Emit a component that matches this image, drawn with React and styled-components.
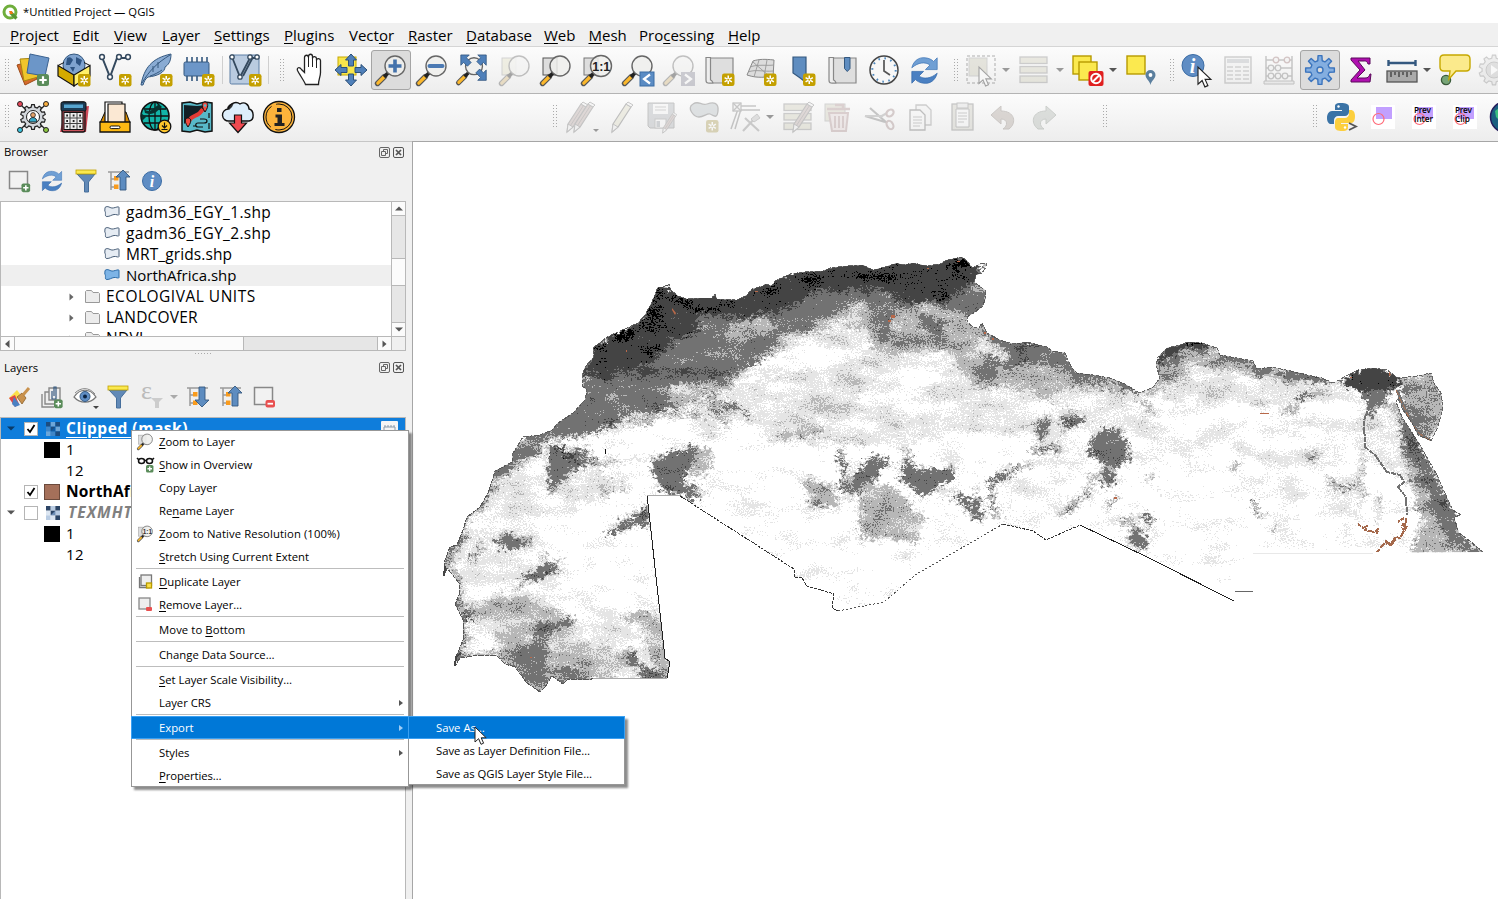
import React from "react";
import styled, { createGlobalStyle, css } from "styled-components";

const Global = createGlobalStyle`
  * { box-sizing: border-box; }
  html, body { margin: 0; padding: 0; }
  body { width: 1498px; height: 899px; overflow: hidden; background: #f0f0f0; }
  u { text-decoration-thickness: 1px; text-underline-offset: 2px; }
`;

const ui = `"Open Sans", "Noto Sans", sans-serif`;

const Window = styled.div`
  width: 1498px; height: 899px; display: flex; flex-direction: column;
  font-family: ${ui}; color: #000; position: relative; overflow: hidden; white-space: nowrap;
`;
const TitleBar = styled.header`
  height: 23px; background: #fff; display: flex; align-items: center; padding-left: 2px; gap: 5px;
  font-size: 11.3px; flex: none;
`;
const MenuBar = styled.nav`
  height: 24px; background: #f0f0f0; display: flex; align-items: center; padding-left: 10px; flex: none;
  border-bottom: 1px solid #d5d5d5;
`;
const MenuLabel = styled.span`
  width: ${(p) => p.$w}px; font-size: 15px; line-height: 22px;
`;
const ToolBar = styled.div`
  height: 47px; flex: none; display: flex; align-items: center; overflow: hidden; padding-bottom: ${(p) => (p.$last ? 2 : 0)}px;
  background: linear-gradient(#fcfcfc, #ededed); border-bottom: ${(p) => (p.$last ? "0" : "1px")} solid #b4b4b4;
`;
const Tool = styled.div`
  width: ${(p) => p.$w || 41}px; height: 40px; flex: none; margin-left: ${(p) => p.$ml || 0}px;
  display: flex; align-items: center; justify-content: center; border-radius: 3px;
  opacity: ${(p) => (p.$off ? 0.38 : 1)};
  filter: ${(p) => (p.$off ? "saturate(0.45)" : "none")};
  ${(p) => p.$on && css`width: 40px; background: #dcdcdc; border: 1px solid #a5a5a5;`}
  svg { overflow: visible; display: block; }
`;
const Grip = styled.i`
  width: 5px; height: 25px; flex: none; margin-left: ${(p) => p.$ml}px; margin-right: ${(p) => p.$mr}px;
  background-image: radial-gradient(circle, #aaa 0.7px, transparent 0.9px); background-size: 3px 3px;
`;
const Rule = styled.i`
  width: 1px; height: 28px; flex: none; background: #cfcfcf; margin: 0 ${(p) => p.$mr ?? 3}px 0 3px;
`;
const Caret = styled.i`
  flex: none; margin-left: ${(p) => p.$ml || 0}px; margin-right: ${(p) => p.$mr || 0}px; margin-top: ${(p) => p.$mt || 0}px;
  border: 4px solid transparent; border-top-color: ${(p) => p.$c || "#555"}; border-bottom: 0; width: 8px;
  ${(p) => p.$small && "border-width: 3px 3px 0; width: 6px;"}
`;
const Main = styled.main`flex: 1; display: flex; min-height: 0; `;
const Dock = styled.aside`
  width: 406px; flex: none; display: flex; flex-direction: column; background: #f0f0f0; border-top: 1px solid #c6c6c6;
`;
const Splitter = styled.div`width: 6px; flex: none; background: #f0f0f0; border-top: 1px solid #c6c6c6;`;
const Canvas = styled.section`
  flex: 1; background: #fff; border-left: 1px solid #a6a6a6; border-top: 1px solid #a6a6a6; overflow: hidden;
  svg { display: block; }
`;
const DockTitle = styled.div`
  height: 22px; display: flex; align-items: center; font-size: 11.3px; padding: 0 1px 0 4px; flex: none;
  span { flex: 1; margin-top: ${(p) => p.$mt ?? -3}px; }
  svg { margin-left: 2px; }
`;
const DockTools = styled.div`
  height: ${(p) => p.$h}px; display: flex; align-items: center; padding: 0 0 ${(p) => p.$pb}px 8px; flex: none; gap: ${(p) => p.$g}px;
  svg { overflow: visible; flex: none; }
`;
const BrowserBox = styled.div`
  height: 150px; flex: none; border: 1px solid #b8b8b8; display: grid; background: #fff;
  grid-template: 1fr 14px / 1fr 14px;
`;
const LayerBox = styled.div`
  flex: 1; border: 1px solid #b8b8b8; border-bottom: 0; background: #fff; overflow: hidden;
`;
const Clip = styled.div`overflow: hidden;`;
const Row = styled.div`
  height: 21px; display: flex; align-items: center; font-size: 15px; line-height: 21px;
  padding-left: ${(p) => p.$in}px; background: ${(p) => (p.$sel ? "#0f7ddb" : p.$hov ? "#efefef" : "transparent")};
  color: ${(p) => (p.$sel ? "#fff" : "#000")};
  svg { flex: none; }
`;
const Name = styled.span`
  margin-left: ${(p) => p.$ml ?? 6}px; letter-spacing: ${(p) => p.$ls ?? 0}px; font-size: ${(p) => p.$fs ?? 15}px;
  ${(p) => p.$b && "font-weight: 700;"}
  ${(p) => p.$u && "text-decoration: underline; text-decoration-thickness: 1px; text-underline-offset: 3px;"}
  ${(p) => p.$i && "font-style: italic; color: #808080;"}
`;
const Check = styled.span`
  width: 14px; height: 14px; flex: none; border: 1px solid #b5b5b5; background: #fff; margin-left: ${(p) => p.$ml}px;
  display: grid; place-items: center;
`;
const Swatch = styled.span`width: 16px; height: 16px; flex: none; background: ${(p) => p.$c}; border: 1px solid ${(p) => p.$bd || p.$c};`;
const Push = styled.span`margin-left: auto; margin-right: 7px; display: flex;`;
const BarV = styled.div`
  background: #e6e6e6; border-left: 1px solid #b8b8b8; display: flex; flex-direction: column; 
`;
const BarH = styled.div`
  background: #e6e6e6; border-top: 1px solid #b8b8b8; display: flex;
`;
const BarPart = styled.div`
  flex: ${(p) => (p.$s ? `0 0 ${p.$s}px` : 1)}; background: ${(p) => (p.$t ? "#e6e6e6" : "#fbfbfb")};
  display: grid; place-items: center;
  ${(p) => (p.$v ? "border-bottom" : "border-right")}: 1px solid #b8b8b8;
  &:last-child { border: 0; }
`;
const Corner = styled.div`border-left: 1px solid #b8b8b8; border-top: 1px solid #b8b8b8; background: #f0f0f0;`;
const DotLine = styled.div`
  height: 6px; flex: none; display: flex; justify-content: center;
  &::after { content: ""; width: 18px; height: 3px; margin-top: 1px; background: radial-gradient(circle, #aaa 0.6px, transparent 0.8px) 0 0 / 3px 3px; }
`;
const Popup = styled.div`
  position: absolute; left: ${(p) => p.$x}px; top: ${(p) => p.$y}px; width: ${(p) => p.$w}px; background: #fff;
  box-shadow: inset 0 0 0 1px #979797, 3px 3px 2px rgba(0,0,0,.45);
`;
const Item = styled.div`
  height: 23px; display: flex; align-items: center; font-size: 11.3px; line-height: 22px; padding-right: 6px;
  letter-spacing: ${(p) => p.$ls ?? 0}px;
  color: ${(p) => (p.$on ? "#fff" : "#000")};
  ${(p) => p.$on && "background: #0078d7; box-shadow: inset 0 0 0 1px #3ba0f2;"}
`;
const IconCell = styled.span`width: ${(p) => p.$w}px; padding-left: 6px; flex: none; display: flex; svg { overflow: visible; }`;
const Chevron = styled.i`
  margin-left: auto; border: 3.5px solid transparent; border-left: 4px solid ${(p) => (p.$on ? "#9fcdf5" : "#555")}; border-right: 0;
`;
const Divider = styled.div`height: 2px; padding: 0 5px; &::after { content: ""; display: block; height: 1px; background: #bdbdbd; }`;
const Pointer = styled.div`position: absolute; left: 474px; top: 726px;`;

/* ---------- icons ---------- */
const S = ({ s = 32, b = 32, children }) => (
  <svg width={s} height={s} viewBox={`0 0 ${b} ${b}`} fill="none">{children}</svg>
);
const Star = ({ x = 20, y = 20 }) => (
  <g transform={`translate(${x} ${y})`}>
    <rect width="12.5" height="12.5" rx="2.2" fill="#c4a000" />
    <path d="M6.25 2v8.5M2.6 4.1l7.3 4.3M2.6 8.4l7.3-4.3" stroke="#fff" strokeWidth="1.5" />
    <circle cx="6.25" cy="6.25" r="1" fill="#c4a000" />
  </g>
);
const Plus = ({ x = 20, y = 20, k = 1 }) => (
  <g transform={`translate(${x} ${y}) scale(${k})`}>
    <rect width="12" height="12" rx="2.5" fill="#5a8c5a" />
    <path d="M6 2.3v7.4M2.3 6h7.4" stroke="#fff" strokeWidth="2.2" />
  </g>
);
const Lens = ({ cx = 20, cy = 12, r = 10, fill = "#eeeeec", children }) => (
  <g>
    <path d="M2.5 29.5L9.5 22.5" stroke="#555" strokeWidth="5.4" strokeLinecap="round" />
    <path d="M2.8 29.2L9 23" stroke="#fcb82c" strokeWidth="3.2" strokeLinecap="round" />
    <path d="M9 23l4-4" stroke="#222" strokeWidth="3.6" />
    <circle cx={cx} cy={cy} r={r} fill={fill} fillOpacity=".85" stroke="#666" strokeWidth="1.4" />
    {children}
  </g>
);
const Refresh = ({ s = 32 }) => (
  <S s={s}>
    <path d="M2 13C4 5 10 1 17 2c4 .4 7 2 9 4l4-4v13H17l5-5c-5-4-13-3-20 3z" fill="#6f9fd4" stroke="#3f74b5" strokeWidth=".8" />
    <path d="M30 19c-2 8-8 12-15 11-4-.4-7-2-9-4l-4 4V17h13l-5 5c5 4 13 3 20-3z" fill="#4a80c2" stroke="#3268ab" strokeWidth=".8" />
  </S>
);
const ArrowFour = "M16 0l5.5 6h-3v6h-5V6h-3zM16 32l5.5-6h-3v-6h-5v6h-3zM0 16l6-5.500v3h6v5H6v3zM32 16l-6-5.500v3h-6v5h6v3z";
const Sheet = () => (
  <g><path d="M5 4h24v25H5z" fill="#dedede" stroke="#888" strokeWidth="1.2" /><path d="M2 3.500h4.500v22.500c2 0 2 3 3 3H4c-1.500 0-2-1-2-3z" fill="#eee" stroke="#888" strokeWidth="1.2" /></g>
);
const Cursor = ({ x = 0, y = 0, k = 1 }) => (
  <path transform={`translate(${x} ${y}) scale(${k})`} d="M0 0v15l3.600-3.300L6 17.300l2.600-1.100L6.200 10.800h5z" fill="#fff" stroke="#222" strokeWidth="1" />
);
const gearPath = (n, r1, r2, c) => {
  let d = "";
  const st = (Math.PI * 2) / n;
  for (let i = 0; i < n; i++) {
    const a = i * st;
    [[r1, -0.3], [r2, -0.17], [r2, 0.17], [r1, 0.3]].forEach(([r, o], j) => {
      d += `${i + j ? "L" : "M"}${(c + r * Math.sin(a + o * st)).toFixed(2)} ${(c - r * Math.cos(a + o * st)).toFixed(2)}`;
    });
  }
  return d + "z";
};
const Pencil = ({ x = 0 }) => (
  <g transform={`translate(${x} 0)`}>
    <path d="M5 23L18 3l5 3-13 20-6 5z" fill="#dfdca8" stroke="#666" strokeWidth="1.2" /><path d="M5 23l5 3-6 5zM18 3l2-2 5 3-2 2z" fill="#eee" stroke="#777" />
  </g>
);
const RedPencil = ({ x = 0, y = 0, k = 1 }) => (
  <g transform={`translate(${x} ${y}) scale(${k})`}>
    <path d="M5 23L18 3l5 3-13 20-6 5z" fill="#c9a39b" stroke="#777" strokeWidth="1.2" /><path d="M5 23l5 3-6 5zM18 3l2-2 5 3-2 2z" fill="#eee" stroke="#777" /><path d="M7.500 24.500l13-20" stroke="#8a7a78" />
  </g>
);

const I = {
  dataSource: <S><path d="M0 11l14-4 6 18-12 6z" fill="#d66b2c" stroke="#9c4a18" /><path d="M3 5l17-1 1 19-14 4z" fill="#f0c52b" stroke="#a88610" /><path d="M13 0l19 4-4 18-18-3z" fill="#6c96c8" stroke="#3b6291" /><Plus /></S>,
  geopackage: <S><circle cx="16" cy="11" r="11" fill="#7fa3cf" stroke="#34587f" /><path d="M9 4c3-2 5 0 6 2l-3 5-4 0zM18 3l6 3-2 6-4-3zM12 13l5 0-2 5z" fill="#2e5483" /><path d="M0 11.500l16 9.500v11L0 22z" fill="#d4ab00" stroke="#111" strokeWidth="1.200" /><path d="M32 11.500l-16 9.500v11l16-10z" fill="#fff06a" stroke="#111" strokeWidth="1.200" /><path d="M0 11.500l6-3M32 11.500l-6-3" stroke="#111" /><Star /></S>,
  shape: <S><path d="M3 3l8 20L18 4h9" stroke="#34495e" strokeWidth="2" /><g fill="#fff" stroke="#34495e" strokeWidth="1.500"><circle cx="3" cy="3" r="2.400" /><circle cx="11" cy="23" r="2.400" /><circle cx="20" cy="3" r="2.400" /><circle cx="29" cy="3" r="2.400" /></g><Star /></S>,
  feather: <S><path d="M1 31C4 14 12 4 31 0c0 8-3 11-6 13 0 5-7 9-17 10-3 2-4 5-5 8z" fill="#89abd3" stroke="#34587f" /><path d="M2 29C9 17 17 9 30 1M10 22c4-1 9-4 12-6M13 12v6M18 8v6" stroke="#34587f" strokeWidth="1" /><Star /></S>,
  chip: <S><path d="M5 3v6M10 3v6M15 3v6M20 3v6M25 3v6M5 22v5M10 22v5M15 22v5" stroke="#34587f" strokeWidth="1.600" /><rect x="2" y="8" width="25" height="14" rx="1.500" fill="#6c96c8" stroke="#34587f" /><Star /></S>,
  virtual: <S><rect x="1" y="1" width="29" height="29" rx="1.500" fill="#b9cbe0" stroke="#5d7ea5" /><path d="M3 3l8 20L21 4h8M14 22L24 3" stroke="#34495e" strokeWidth="1.800" /><g fill="#fff" stroke="#34495e" strokeWidth="1.300"><circle cx="3" cy="3" r="2.200" /><circle cx="11" cy="23" r="2.200" /><circle cx="21" cy="3" r="2.200" /><circle cx="28" cy="3" r="2.200" /></g><Star /></S>,
  hand: <S><path d="M10.500 30.500c-1-3-6-10-8-14-1-3 2-4 4-1l3 3V3.500c0-3 4-3 4 0v-1c0-3 4-3 4 0v2c0-3 4-2 4 0v2c0-3 4-2 4 0v12c0 4-2 7-2 12z" fill="#fff" stroke="#222" strokeWidth="1.300" /><path d="M13.500 3v10M17.500 4v9M21.500 6v8" stroke="#222" /></S>,
  pan: <S><rect x="3" y="3" width="18" height="18" fill="#f8e64b" stroke="#c6a800" /><path d={ArrowFour} fill="#4f80ba" stroke="#2c5079" /></S>,
  zoomIn: <S><Lens><path d="M20 5.500v13M13.500 12h13" stroke="#4472ab" strokeWidth="3.600" /></Lens></S>,
  zoomOut: <S><Lens><path d="M13.500 12h13" stroke="#4c7ab3" strokeWidth="4" strokeLinecap="round" /></Lens></S>,
  zoomFull: <S b={34}><g transform="translate(-2 1)"><Lens cx={19} r={9} /><path d="M5 0h9l-3 3 5 5-4 4-4-4-3 3zM32 0h-9l3 3-4 4 4 4 3-3 3 3zM32 27h-9l3-3-5-5 4-4 4 4 3-3z" fill="#4f80ba" stroke="#2c5079" strokeWidth=".8" /></g></S>,
  zoomSel: <S><rect x="3" y="4" width="14" height="17" fill="#e6e0a0" stroke="#999" /><Lens /></S>,
  zoomLayer: <S><rect x="3" y="4" width="14" height="17" fill="#ddd" stroke="#555" /><Lens /></S>,
  zoomNative: <S><rect x="3" y="4" width="14" height="17" fill="#ddd" stroke="#777" /><Lens r={10.5}><text x="20.300" y="16.500" fontFamily="Liberation Sans, sans-serif" fontWeight="700" fontSize="12.500" textAnchor="middle" fill="#222">1:1</text></Lens></S>,
  zoomLast: <S><Lens /><rect x="18" y="18" width="14" height="14" fill="#5b8cc4" stroke="#3b6ca4" /><path d="M28 20.500l-6 4.500 6 4.500" stroke="#fff" strokeWidth="2.200" /></S>,
  zoomNext: <S><Lens /><rect x="18" y="18" width="14" height="14" fill="#88a" /><path d="M22 20.500l6 4.500-6 4.500" stroke="#fff" strokeWidth="2.200" /></S>,
  mapNew: <S><Sheet /><Star x={18} y={19.5} /></S>,
  map3d: <S><path d="M8 7c6-2 12-2 21-1l-1 18C19 22 14 25 2 21z" fill="#dcdcdc" stroke="#888" /><path d="M5 13c8-3 16-1 24-2M3 18c8-3 16 0 25-1M14 6l-5 17M22 6l-3 17M8 8l16 14" stroke="#999" strokeWidth=".9" /><Star x={19} y={19.5} /></S>,
  bookmarkNew: <S><path d="M7 3h13v25.500l-6.500-5L7 19z" fill="#5f8dc0" stroke="#34587f" strokeWidth="1.200" /><Star x={17} y={19.500} /></S>,
  bookmarks: <S><Sheet /><path d="M17.500 3.500h5.500v11l-2.750 3-2.750-3z" fill="#5f8dc0" stroke="#34587f" /></S>,
  clock: <S><circle cx="16" cy="16" r="14" fill="#f7f7f7" stroke="#444" strokeWidth="1.500" /><circle cx="16" cy="16" r="11.700" stroke="#4f88bd" strokeWidth="2" strokeDasharray="1.600 4.530" /><path d="M16 6v11l6 4" stroke="#555" strokeWidth="1.700" /></S>,
  select: <S><rect x="2" y="2" width="28" height="27" stroke="#777" strokeWidth="1.500" strokeDasharray="3 2" /><rect x="4" y="4" width="18" height="18" fill="#c9c59c" stroke="#999" /><Cursor x={14} y={13} k={1.1} /></S>,
  rows: <S><g fill="#d3cfa4" stroke="#888" strokeWidth="1.300"><rect x="2" y="3" width="27" height="6.500" /><rect x="2" y="12.500" width="27" height="6.500" /><rect x="2" y="22" width="27" height="6.500" /></g></S>,
  deselect: <S><g fill="#fbe94f" stroke="#b79a00" strokeWidth="1.400"><rect x="1" y="2" width="18" height="18" /><rect x="7" y="8" width="18" height="18" /></g><rect x="16.500" y="17" width="15" height="15" rx="2" fill="#e02020" /><circle cx="24" cy="24.500" r="4.800" stroke="#fff" strokeWidth="2" /><path d="M20.500 28l7-7" stroke="#fff" strokeWidth="2" /></S>,
  selectLoc: <S><rect x="2" y="2" width="18" height="18" fill="#fbe94f" stroke="#b79a00" strokeWidth="1.400" /><path d="M25.500 31c-1-5-5-6-5-10a5 5 0 0 1 10 0c0 4-4 5-5 10z" fill="#5b7f9e" /><circle cx="25.500" cy="21" r="1.900" fill="#fff" /></S>,
  identify: <S><circle cx="12" cy="11.500" r="11" fill="#5f8dc4" stroke="#3b6ca4" /><text x="11.500" y="18.500" fontFamily="Liberation Serif, serif" fontStyle="italic" fontWeight="700" fontSize="20" textAnchor="middle" fill="#fff">i</text><Cursor x={17} y={13} k={1.15} /></S>,
  table: <S><rect x="3" y="3" width="26" height="26" fill="#eee" stroke="#888" strokeWidth="1.400" /><path d="M5 7h22" stroke="#a8b4c0" strokeWidth="4" /><path d="M5 13h6M5 17h6M5 21h6M5 25h6M13 13h6M13 17h6M13 21h6M13 25h6M21 13h6M21 17h6M21 21h6M21 25h6" stroke="#999" strokeWidth="1.300" /></S>,
  abacus: <S><path d="M3 2v26M29 2v26M3 6h26M3 14h26M3 22h26" stroke="#777" strokeWidth="1.500" /><path d="M1 27h30v3H1z" fill="#ddd" stroke="#777" /><g fill="#eee" stroke="#777" strokeWidth="1.300"><circle cx="13" cy="6" r="2.800" stroke="#b66" /><circle cx="24" cy="6" r="2.800" stroke="#b66" /><circle cx="8" cy="14" r="2.800" /><circle cx="15" cy="14" r="2.800" /><circle cx="8" cy="22" r="2.800" /><circle cx="15" cy="22" r="2.800" /><circle cx="22" cy="22" r="2.800" /></g></S>,
  gear: <S><path d={gearPath(8, 9.5, 14.5, 16)} fill="#84aee0" stroke="#3b74bd" strokeWidth="1.400" strokeLinejoin="round" /><circle cx="16" cy="16" r="3" fill="#dcdcdc" stroke="#3b74bd" strokeWidth="1.400" /></S>,
  sigma: <S><path d="M6 4h19v6h-2c-1-3-2-3-4-3h-6l7 9-8 8h8c3 0 4-1 5-4h1l-1 8H6v-2l9-10-9-10z" fill="#b010b0" stroke="#5a0a5a" /></S>,
  ruler: <S><path d="M2 9h28M2.500 6v6M29.500 6v6" stroke="#34587f" strokeWidth="2.400" /><rect x="1" y="17" width="30" height="11" fill="#aaa" stroke="#555" strokeWidth="1.300" /><path d="M5 18v5M9 18v3M13 18v5M17 18v3M21 18v5M25 18v3" stroke="#333" strokeWidth="1.200" /></S>,
  tip: <S><circle cx="7" cy="26" r="4.600" fill="#77a577" stroke="#3a5a3a" strokeWidth="1.300" /><path d="M5 1h22c3 0 4 2 4 4v8c0 3-2 4-4 4H17l-7 8 1-8H5c-3 0-4-2-4-4V5c0-3 2-4 4-4z" fill="#fbea8c" stroke="#c6a800" strokeWidth="1.400" /></S>,
  action: <S><path d={gearPath(10, 12, 15, 16)} fill="#ddd" stroke="#888" strokeWidth="1.200" /><circle cx="16" cy="16" r="8" fill="#bbb" stroke="#888" /><path d="M13 11l7 5-7 5z" fill="#fff" /></S>,
  hub: <S><path d="M3 3l7 7M29 3l-7 7M3 29l7-7M29 29l-7-7" stroke="#222" strokeWidth="1.300" /><path d={gearPath(10, 10, 12.5, 16)} fill="#d3d7dc" stroke="#222" strokeWidth="1.200" /><circle cx="16" cy="16" r="6.500" fill="#fff" stroke="#222" /><path d="M12 21c0-6 8-6 8 0z" fill="#36a9c9" stroke="#222" /><circle cx="16" cy="14" r="2.400" fill="#e5a26a" stroke="#222" strokeWidth=".8" /><g stroke="#222"><circle cx="3" cy="3" r="2.500" fill="#e8485a" /><circle cx="29" cy="3" r="2.500" fill="#fbb040" /><circle cx="3" cy="29" r="2.500" fill="#3ac5e0" /><circle cx="29" cy="29" r="2.500" fill="#8cc63f" /></g></S>,
  calc: <S><path d="M22 6l9-1-3 26-26 0 4-18z" fill="#d04a5a" /><rect x="4" y="1" width="23" height="30" rx="2" fill="#c9525c" stroke="#111" strokeWidth="1.300" /><rect x="3" y="1" width="25" height="9" rx="1.500" fill="#1b3c55" stroke="#111" /><rect x="6" y="3.500" width="19" height="3.500" fill="#56a5cf" /><rect x="6" y="11.500" width="19" height="17" fill="#eee" stroke="#111" /><path d="M12 12v16M19 12v16M6 17h19M6 22.500h19" stroke="#444" strokeWidth="1" /><path d="M8.200 14.500h1.800M14.700 14.500h1.800M21.200 14.500h1.800M8.200 20h1.800M14.700 20h1.800M21.200 20h1.800M8.200 25.500h1.800M14.700 25.500h1.800M21.200 25.500h1.800" stroke="#222" strokeWidth="1.800" /></S>,
  tray: <S><path d="M1 22L6 11h21l4 11z" fill="#d98c00" stroke="#111" /><path d="M6 1h17v20H6z" fill="#fff" stroke="#111" strokeWidth="1.200" /><path d="M9 3h17v19H9z" fill="#fbe8d3" stroke="#111" strokeWidth="1.200" /><path d="M1 21h30v10H1z" fill="#fdb913" stroke="#111" strokeWidth="1.300" /><rect x="11" y="25" width="10" height="2.600" rx="1.300" fill="#fff" stroke="#111" /></S>,
  globe: <S><circle cx="15" cy="15" r="14" fill="#12b5a8" stroke="#111" strokeWidth="1.600" /><ellipse cx="15" cy="15" rx="6" ry="14" stroke="#111" strokeWidth="1.300" /><path d="M15 1v28M1 15h28M4 8h22M4 22h22" stroke="#111" strokeWidth="1.300" /><path d="M4 8c6 5 10-1 15-5l3 3c-5 4-8 9-17 6zM1 12l5 4-4 4z" fill="#08322f" /><circle cx="24.500" cy="25.500" r="6.300" fill="#fdc52c" stroke="#111" strokeWidth="1.300" /><path d="M24.500 21.500v5M22 24.500l2.500 2.500 2.500-2.500M21.500 28.500h6" stroke="#111" strokeWidth="1.200" /></S>,
  treasure: <S><path d="M1 2l8-1 7 2 8-2 7 1v28l-7 1-8-2-7 2-8-1z" fill="#58b9c9" stroke="#111" strokeWidth="1.500" /><path d="M3 4l13 1 10-1-6 9-10 3-7 7z" fill="#0b1014" opacity=".9" /><path d="M8 20c3-7 9-3 14-12" stroke="#e33b35" strokeWidth="4" /><path d="M24 11c-5-7-2-10 0-10s5 3 0 10zM7 26c-5-7-2-9 0-9s5 2 0 9z" fill="#ef4b40" stroke="#111" /><circle cx="24" cy="4.500" r="1.300" fill="#58b9c9" /><path d="M15 25h-3M19 18h4c4 0 4 4 0 4h-6c-3 0-3 4 0 4h5M28 28v-6M28 12v5" stroke="#111" strokeWidth="1.200" /></S>,
  cloud: <S><path d="M7 20a6 6 0 0 1-1-12C8 2 14 0 18 3c5-3 9 1 9 5 5 1 6 11 0 12z" fill="#ddeefb" stroke="#111" strokeWidth="1.400" /><path d="M5 7c1-3 3-4 7-5l-2 4-3 3z" fill="#111" opacity=".85" /><path d="M12.500 14h7v8h5l-8.500 9.500L7.500 22h5z" fill="#f04a50" stroke="#111" strokeWidth="1.200" /></S>,
  about: <S><circle cx="16" cy="16" r="15.500" fill="#fcb33b" stroke="#111" strokeWidth="1.300" /><circle cx="16" cy="16" r="13" stroke="#111" strokeWidth="1" strokeDasharray="24 5" /><path d="M12.500 13.500h6.500v8.500h2.500v3H11.500v-3h3v-5.500h-2zM14 7h4.500v4H14z" fill="#222" /></S>,
  pencils: <S><RedPencil x={-3} /><RedPencil x={4} /></S>,
  pencil: <S><Pencil x={3} /></S>,
  save: <S><path d="M1 2h26v25H3l-2-2z" fill="#a7b1bc" stroke="#777" /><rect x="6" y="3" width="15" height="10" fill="#f4f4f4" /><path d="M8 6h11M8 9h11" stroke="#999" /><rect x="8" y="18" width="11" height="9" fill="#f4f4f4" stroke="#888" /><rect x="9.500" y="20" width="3.500" height="6" fill="#8f9dad" /><RedPencil x={13} y={11} k={0.68} /></S>,
  blob: <S><path d="M4 3c6-4 8 2 14 0s12-2 11 7-5 4-8 3-6 3-11 3S-3 7 4 3z" fill="#aebec8" stroke="#666" strokeWidth="1.300" /><Star x={17} y={19} /></S>,
  vertex: <S><path d="M2 28L9 8M6 28l6-20M12 5h15M12 9h19" stroke="#777" strokeWidth="1.500" /><rect x="4" y="2" width="8" height="8" stroke="#777" strokeWidth="1.300" fill="#eee" /><path d="M4 2l8 8M12 2L4 10" stroke="#777" strokeWidth="1.300" /><path d="M14 30l12-13M16 17l14 13" stroke="#888" strokeWidth="2.200" /><path d="M22 18l6-5 3 4-6 4z" fill="#bbb" stroke="#888" /></S>,
  attrs: <S><g fill="#d3cfa4" stroke="#888" strokeWidth="1.300"><rect x="2" y="3" width="27" height="6.500" /><rect x="2" y="12.500" width="27" height="6.500" /><rect x="2" y="22" width="27" height="6.500" /></g><RedPencil x={7} /></S>,
  trash: <S><rect x="2" y="3" width="20" height="17" fill="#d3cfa4" stroke="#999" /><path d="M4 8h23M12 4h8v4" stroke="#c98888" strokeWidth="2.500" /><path d="M6 12h19l-2 18H9z" fill="#f0d0d0" stroke="#c98888" strokeWidth="2" /><path d="M12 15v12M16 15v12M20 15v12" stroke="#c98888" strokeWidth="2" /></S>,
  cut: <S><path d="M1 15l20 6M6 7l17 15" stroke="#777" strokeWidth="2.200" /><path d="M1 15l18 0M16 16l7-4" stroke="#999" strokeWidth="2.200" /><ellipse cx="26" cy="12" rx="4" ry="3" transform="rotate(-40 26 12)" stroke="#b98080" strokeWidth="2.200" /><ellipse cx="26" cy="24" rx="3" ry="4.500" transform="rotate(-30 26 24)" stroke="#b98080" strokeWidth="2.200" /></S>,
  copy: <S><path d="M11 4h10l5 5v15H11z" fill="#eee" stroke="#888" strokeWidth="1.300" /><path d="M5 9h10l5 5v15H5z" fill="#f4f4f4" stroke="#666" strokeWidth="1.300" /><path d="M8 16h9M8 19h9M8 22h9M8 25h7" stroke="#888" /></S>,
  paste: <S><rect x="6" y="3" width="21" height="26" fill="#ccc8b0" stroke="#777" strokeWidth="1.300" /><path d="M10 8h13v18H10z" fill="#f4f4f4" stroke="#777" /><rect x="11" y="2" width="11" height="5" fill="#ddd" stroke="#777" /><path d="M12 12h9M12 15h9M12 18h9M12 21h6" stroke="#888" /></S>,
  undo: <S><path d="M4 14L14 5v5c14 0 16 12 8 18h-6c5-3 5-10-2-10v5z" fill="#b79f8e" stroke="#8f7a6c" /></S>,
  redo: <S><path d="M28 14L18 5v5C4 10 2 22 10 28h6c-5-3-5-10 2-10v5z" fill="#aab7aa" stroke="#7f8f7f" /></S>,
  python: <S><path d="M15 2c-6 0-6 2-6 4v3h7v1H6c-3 0-5 3-5 7s2 6 4 6h3v-4c0-2 2-4 4-4h7c2 0 4-2 4-4V6c0-3-3-4-8-4z" fill="#3a73a6" /><path d="M16 30c6 0 6-2 6-4v-3h-7v-1h10c3 0 4-3 4-7s-2-6-4-6h-2v4c0 2-2 4-4 4h-7c-2 0-3 2-3 4v5c0 3 3 4 7 4z" fill="#fccf3e" /><circle cx="12.500" cy="5.500" r="1.200" fill="#fff" /><circle cx="19" cy="26.500" r="1.200" fill="#fff" /><path d="M23 22l7 3.500-7 3.500" stroke="#555" strokeWidth="1.800" /></S>,
  wgsGlobe: <S><circle cx="16" cy="16" r="15.500" fill="#1b5f80" stroke="#241a5a" strokeWidth="1.500" /><path d="M5 10l8-6 2 9-6 6-3-3z" fill="#3bbf7f" /></S>,
};
const Preview = ({ a, b }) => (
  <S s={24} b={24}>
    <rect width="24" height="24" fill="#fff" /><rect x="5" y="2" width="16" height="12" fill="#c2a0ff" />
    <circle cx="7.500" cy="14" r="5.500" stroke="#ff6a78" strokeWidth="1.200" />
    {a && <g fontFamily="Open Sans, sans-serif" fontSize="8.300" fontWeight="600" fill="#000"><text x="2" y="8" textLength="17">{a}</text><text x="2" y="17" textLength={b.length > 4 ? 19 : 15}>{b}</text></g>}
  </S>
);
const Funnel = () => <S s={22} b={22}><path d="M2 4h18l-6.500 8v10h-4V12z" fill="#6189b7" stroke="#466e9b" /><rect x="1" y="0" width="20" height="4" fill="#fbe94f" stroke="#c0a000" strokeWidth=".8" /></S>;
const TreeArrow = ({ up }) => (
  <S s={22} b={22}><path d="M0 2h21M3 2v18M3 9h5M3 17h5" stroke="#999" strokeWidth="1.500" /><rect x="6" y="6" width="4.500" height="4.500" fill="#f99b1d" /><rect x="6" y="14.500" width="4.500" height="4.500" fill="#f99b1d" />
    <path d={up ? "M15 0l7 7h-4v13h-6V7H8z" : "M15 21l7-7h-4V1h-6v13H8z"} fill="#5d8cc0" stroke="#34587f" strokeWidth=".9" /></S>
);
const AddBox = ({ minus }) => (
  <S s={22} b={22}><rect x="1.500" y="1.500" width="18" height="17" fill="#f2f2f2" stroke="#888" strokeWidth="1.500" />{minus ? <g><rect x="12.500" y="14" width="9.500" height="7.500" rx="2" fill="#e85050" /><path d="M14.500 17.700h5.500" stroke="#fff" strokeWidth="1.800" /></g> : <Plus x={13.500} y={13.500} k={0.72} />}</S>
);
const DockButtons = () => (
  <>
    <svg width="12" height="12" fill="none" stroke="#666"><rect x=".5" y=".5" width="10" height="10" rx="1.500" /><path d="M4.500 4.500V2.500h4v4h-2M2.500 4.500h4v4h-4z" /></svg>
    <svg width="12" height="12" fill="none" stroke="#555"><rect x=".5" y=".5" width="10" height="10" rx="1.500" /><path d="M3 3l5 5M8 3L3 8" strokeWidth="1.700" /></svg>
  </>
);
const PolyIcon = styled.svg`margin-bottom: 3px;`;
const Poly = ({ on }) => (
  <PolyIcon width="16" height="13" fill={on ? "#7db4e6" : "#e6ecf3"} stroke={on ? "#2d6ca8" : "#4a5f78"}>
    <path d="M1 2.500c3-2.500 5 1 8 .5s6-2 6-.5v7c0 1.500-3-.5-5 0-3 .5-4 2-7 2C0 11.500 2.500 8 .8 6z" />
  </PolyIcon>
);
const FolderIcon = () => <svg width="15" height="14" fill="#ececec" stroke="#999"><path d="M.5 12.500v-11l1-1h5l1.500 2h5.500l1 1v9z" /></svg>;
const Right = ({ c = "#666" }) => <svg width="7" height="8"><path d="M1.500 .5v7L5.500 4z" fill={c} /></svg>;
const Left = () => <svg width="7" height="8"><path d="M5.500 0v8L1 4z" fill="#555" /></svg>;
const Up = () => <svg width="8" height="5"><path d="M0 4.500h8L4 .5z" fill="#555" /></svg>;
const Down = ({ c = "#555" }) => <svg width="8" height="5"><path d="M0 .5h8L4 4.500z" fill={c} /></svg>;
const Tick = () => <svg width="10" height="10" fill="none" stroke="#000" strokeWidth="1.800"><path d="M1.500 5l2.500 3L8.500 1" /></svg>;
const RasterIcon = ({ sel }) => {
  const c = sel ? ["#6ea6d8", "#1d4d80", "#3f86c8", "#0e5ba6"] : ["#b9cce3", "#2c4566", "#dce6f2", "#6d8db5"];
  const cells = [1, 0, 1, 2, 1, 0, 0, 2, 1];
  return <svg width="14" height="14">{cells.map((v, i) => <rect key={i} x={(i % 3) * 4.67} y={Math.floor(i / 3) * 4.67} width="4.700" height="4.700" fill={c[v]} />)}<path d="M4.700 9.300h4.600v-4.600" fill={c[3]} /></svg>;
};

/* ---------- map ---------- */
const LAND = "M493 478L495 471 512 462 513 453 523 437 540 435 552 430 558 423 573 413 585 400 587 390 582 386 583 373 585 367 594 357 593 348 607 337 620 331 638 323 645 315 652 302 658 287 663 287 669 284 671 290 678 296 687 299 700 298 712 298 715 294 717 299 737 300 747 295 752 289 763 286 765 284 772 286 775 281 790 274 805 272 823 271 830 268 847 266 863 265 873 270 885 267 897 263 903 265 913 263 927 266 940 264 947 260 962 257 968 262 972 268 980 264 986 263 986 267 982 273 976 275 974 282 985 290 986 298 982 307 975 312 967 317 967 322 973 327 979 328 982 323 984 327 987 333 1000 340 1013 344 1027 342 1047 347 1052 351 1065 353 1068 360 1072 368 1077 373 1093 375 1110 378 1123 383 1140 393 1153 387 1160 378 1156 365 1158 357 1167 348 1180 345 1188 342 1202 343 1217 348 1220 355 1237 358 1253 361 1257 369 1272 367 1300 373 1307 375 1322 378 1333 383 1350 374 1358 370 1373 368 1387 370 1398 378 1417 376 1431 373 1434 383 1441 393 1443 407 1438 427 1431 441 1418 435 1412 423 1403 410 1398 398 1396 402 1402 417 1420 445 1437 475 1448 500 1453 510 1461 515 1454 517 1459 533 1470 541 1483 552 1253 553 1245 567 1234 601 1147 557 1080 525 1046 540 1033 531 1003 524 915 575 884 602 838 611 832 608 834 594 807 586 802 578 795 577 794 569 680 496 647 495 665 658 670 662 667 678 593 678 590 680 568 679 563 684 552 676 545 687 540 692 527 683 515 667 505 664 497 656 480 655 460 658 455 666 456 657 463 640 463 620 455 604 460 593 459 583 455 578 447 568 444 576 445 560 450 547 457 545 463 530 467 517 480 507 488 493z";
const COAST = LAND.slice(0, LAND.indexOf("1253 553")).trim();
const COAST_W = "M593 678L590 680 568 679 563 684 552 676 545 687 540 692 527 683 515 667 505 664 497 656 480 655 460 658 455 666 456 657 463 640 463 620 455 604 460 593 459 583 455 578 447 568 444 576 445 560 450 547 457 545 463 530 467 517 480 507 488 493 493 478";
const COAST_E = "M984 327L1000 340 1013 344 1027 342 1047 347 1065 353 1072 368 1093 375 1123 383 1140 393M1220 355L1253 361 1257 369 1272 367 1300 373 1333 383";
const g = (v) => `rgb(${Math.round(v * 255)},${Math.round(v * 255)},${Math.round(v * 255)})`;
/* [grey level, polygon] painted from the palest class to the darkest */
const ZONES = [
  [0.86, "M690 430L700 400 800 325 990 330 1150 385 1150 420 1040 440 950 432 900 450 820 440 740 450 720 440z"],
  [1, "M690 470L720 425 790 440 850 450 800 460 740 470z"],
  [1, "M850 400L900 385 945 362 940 380 900 400 870 412z"],
  [0.97, "M740 370L800 345 870 345 860 360 800 370 750 385z"],
  [0.89, "M430 600L440 540 480 490 520 470 600 470 620 490 560 520 540 550 560 580 570 600 660 612 690 680 450 690z"],
  [1, "M575 550L650 530 655 606 600 605 560 590z"],
  [0.89, "M990 390L1140 395 1150 430 1080 460 1050 450 1000 430z"],
  [0.85, "M1140 350L1340 380 1360 400 1290 405 1160 402z"],
  [0.92, "M1130 425L1230 425 1260 455 1200 468 1140 460z"],
  [0.92, "M1260 420L1370 420 1360 520 1300 520 1260 490z"],
  [0.93, "M1000 480L1070 460 1110 480 1060 520 1010 520z"],
  [0.88, "M1350 400L1420 420 1430 480 1400 480 1370 460z"],
  [0.72, "M1385 400L1415 410 1420 440 1400 425 1385 415z"],
  [0.95, "M700 500L790 500 800 560 760 530z"],
  [0.67, "M490 465L512 440 540 432 548 445 530 462 505 475 490 500 475 515 460 545 450 575 435 570 460 520z"],
  [0.8, "M560 465L600 462 610 480 585 500 555 495z"],
  [0.66, "M640 408L700 380 760 350 830 305 990 295 1010 345 1130 375 1145 395 1100 388 1060 385 1025 392 1000 388 970 378 945 350 875 357 870 330 830 325 800 340 770 350 745 375 720 395 680 408z"],
  [0.8, "M780 420L840 380 880 350 885 370 860 400 840 425 810 435 785 440z"],
  [0.66, "M795 424L812 415 822 432 800 441z"],
  [0.66, "M960 335L1060 355 1070 378 1060 390 1040 400 1025 385 980 385 960 370z"],
  [0.8, "M978 335L1000 345 1010 358 985 360 972 345z"],
  [0.68, "M1150 400L1145 370 1170 340 1220 346 1250 360 1340 380 1300 386 1250 378 1200 364 1175 380z"],
  [0.73, "M460 610L500 595 550 600 590 640 640 665 600 680 540 695 500 658 500 640 470 625z"],
  [0.68, "M620 618L640 612 668 625 672 682 650 655 640 625z"],
  [0.66, "M1400 435L1420 440 1450 520 1486 556 1410 556 1420 520z"],
  [0.62, "M1398 374L1435 370 1447 405 1431 445 1405 412z"],
  [0.49, "M580 385L700 300 880 280 990 280 990 305 970 318 930 300 850 305 800 328 760 352 740 372 715 378 672 388 668 400 663 412 630 415 610 430 580 437 545 440 530 456 510 470 485 482 515 440z"],
  [0.68, "M732 325L765 317 778 325 745 350 722 345z"],
  [0.55, "M985 335L1050 345 1080 375 1040 360 1000 350z"],
  [0.44, "M1015 340L1068 350 1074 370 1050 360 1030 362 1012 358z"],
  [0.48, "M548 446L580 450 600 460 590 468 575 470 560 482 548 495z"],
  [0.44, "M652 462L672 452 695 446 700 455 692 468 684 480 690 488 712 491 690 498 670 492 655 488z"],
  [0.66, "M690 450L712 448 712 465 695 478z"],
  [0.42, "M608 530L630 515 650 504 650 521 628 525 612 536z"],
  [0.5, "M468 558L482 543 486 546 474 560z"],
  [0.48, "M492 540L500 535 530 540 536 538 515 552 500 550z"],
  [0.42, "M508 594L540 568 568 559 556 568 530 583 516 590z"],
  [0.5, "M485 604L500 593 498 600z"],
  [0.52, "M534 625L552 624 546 640 548 682 540 694 520 670 510 650 530 645z"],
  [0.5, "M555 668L572 665 572 682 563 688z"],
  [0.42, "M625 656L632 648 640 662 650 672 668 678 668 682 645 680z"],
  [0.44, "M895 468L918 470 955 466 960 478 935 490 960 494 980 505 984 528 960 502 935 490 920 498 900 478z"],
  [0.44, "M848 482L868 458 890 458 893 468 880 472 862 492 850 502z"],
  [0.38, "M868 525L880 514 903 514 912 518 905 533 885 542 866 538z"],
  [0.44, "M880 487L893 485 896 495 884 496z"],
  [0.56, "M838 450L846 462 852 490 846 500 840 480z"],
  [0.68, "M800 478L830 485 840 505 822 508 805 500z"],
  [0.68, "M862 480L900 490 925 520 918 542 860 542 858 510z"],
  [0.46, "M975 485L984 518 978 522 971 500z"],
  [0.4, "M918 320L945 321 950 325 938 334 922 330z"],
  [0.42, "M1091 438L1103 429 1120 432 1130 447 1127 458 1116 471 1106 468 1091 456z"],
  [0.5, "M1100 470L1116 472 1112 487 1102 482z"],
  [0.4, "M1058 417L1086 414 1078 428 1062 430z"],
  [0.55, "M1036 422L1050 412 1045 438 1038 440z"],
  [0.47, "M991 474L1008 466 1045 462 1012 473 997 484 994 505 990 485z"],
  [0.4, "M1138 516L1148 512 1155 520 1145 526z"],
  [0.52, "M1126 526L1138 524 1148 540 1144 554 1135 550z"],
  [0.52, "M1252 500L1258 500 1264 520 1256 520z"],
  [0.56, "M1270 528L1280 526 1278 532z"],
  [0.62, "M1280 407L1298 404 1302 413 1284 418z"],
  [0.24, "M1292 402L1304 392 1325 390 1308 396 1295 402z"],
  [0.62, "M1307 455L1318 449 1314 460 1306 460z"],
  [0.18, "M1152 363L1165 345 1200 336 1220 347 1180 352 1160 366z"],
  [0.5, "M1158 372L1175 356 1215 350 1180 360z"],
  [0.18, "M1340 382L1372 360 1402 378 1388 392 1362 392z"],
  [0.46, "M1362 392L1392 388 1382 405 1370 418z"],
  [0.42, "M1397 420L1410 422 1448 500 1460 520 1438 510 1416 465z"],
  [0.48, "M1432 505L1458 515 1464 540 1482 554 1454 548z"],
  [0.19, "M577 382L588 348 640 318 655 280 680 290 745 290 775 275 850 258 980 252 982 282 960 290 945 303 900 303 880 290 817 290 795 308 730 318 703 310 697 330 660 352 643 367 615 372z"],
];
const BLACK = ["M618 337l14-8 3 8-12 5z", "M640 329l12-3 2 3-12 2z", "M659 290l3 20-3-1z", "M948 268l12-9 9 3-1 6-10 3z", "M595 352l9-5-3 6z", "M556 446l10 3 12 9-6-1-12-8z", "M464 614l6-2-1 7-4 2z"];
const STROKES = [
  ["M700 395l20 8 15 4 15 9", 0.42], ["M708 405l10 8 10 12", 0.5], ["M552 447l12 8 18 5", 0.3], ["M585 463l60-5 45-8", 0.66],
  ["M904 448l4 15 10 6", 0.45], ["M841 450l3 20-4 20", 0.5], ["M982 355l12 8 20 0 12-3", 0.4],
  ["M1095 475l-10 15-14 18-12 8", 0.58], ["M1104 508l12-10", 0.4], ["M540 628l35-8", 0.45], ["M994 490l-2 12 8 18", 0.5],
  ["M1030 451l30-4", 0.5], ["M1325 480l12 6 20 3", 0.5], ["M1045 398l15 10 20 8", 0.7], ["M1145 480l10-5", 0.66],
  ["M888 312l-2 28", 0.42], ["M630 420l20 0 20-4 30 0", 0.55], ["M1136 400l10 8 14 6", 0.55], ["M620 485l10 8M600 490l8 12", 0.66],
  ["M1360 440l2 40 2 30M1378 490l0 40", 0.72], ["M540 560l8-12", 0.55], ["M1228 470l16-8", 0.55], ["M1120 525l16-8", 0.55],
  ["M600 378l60-8 60 2 60-20", 0.4], ["M590 395l40-6", 0.4],
];

const LEVELS = "0 0 .27 .27 .27 .27 .27 .45 .45 .45 .45 .45 .72 .72 .72 .9 .9 .9 1 1";
const MapView = () => (
  <svg width="1085" height="757" viewBox="413 142 1085 757">
    <defs>
      <clipPath id="land"><path d={LAND} /></clipPath>
      <filter id="classes" filterUnits="userSpaceOnUse" x="413" y="240" width="1085" height="470" colorInterpolationFilters="sRGB">
        <feTurbulence type="fractalNoise" baseFrequency="0.06 0.09" numOctaves="3" seed="4" result="warp" />
        <feTurbulence type="fractalNoise" baseFrequency="0.24 0.3" numOctaves="3" seed="7" result="grit" />
        <feGaussianBlur in="SourceGraphic" stdDeviation="2" result="soft" />
        <feDisplacementMap in="soft" in2="warp" scale="14" xChannelSelector="R" yChannelSelector="G" result="bent0" />
        <feDisplacementMap in="bent0" in2="grit" scale="16" xChannelSelector="G" yChannelSelector="R" result="bent" />
        <feTurbulence type="fractalNoise" baseFrequency="0.61 0.67" numOctaves="2" seed="11" result="t1" />
        <feColorMatrix in="t1" type="matrix" values="1 0 0 0 0  1 0 0 0 0  1 0 0 0 0  0 0 0 0 1" result="fine" />
        <feTurbulence type="fractalNoise" baseFrequency="0.03 0.06" numOctaves="5" seed="23" result="t2" />
        <feColorMatrix in="t2" type="matrix" values="1 0 0 0 0  1 0 0 0 0  1 0 0 0 0  0 0 0 0 1" result="broad" />
        <feComposite in="broad" in2="fine" operator="arithmetic" k2="0.420" k3="0.360" k4="0" result="noise" />
        <feComposite in="bent" in2="noise" operator="arithmetic" k2="1" k3="1" k4="-0.390" result="n2" />
        <feComponentTransfer in="n2">
          <feFuncR type="discrete" tableValues={LEVELS} />
          <feFuncG type="discrete" tableValues={LEVELS} />
          <feFuncB type="discrete" tableValues={LEVELS} />
          <feFuncA type="linear" slope="0" intercept="1" />
        </feComponentTransfer>
      </filter>
    </defs>
    <g clipPath="url(#land)">
      <g filter="url(#classes)">
        <rect x="413" y="240" width="1085" height="470" fill="#fff" />
        {ZONES.map(([v, d], i) => <path key={i} d={d} fill={g(v)} />)}
        <path d={COAST_E} fill="none" stroke={g(0.4)} strokeWidth="5" />
        <path d={COAST_W} fill="none" stroke={g(0.6)} strokeWidth="7" />
        {STROKES.map(([d, v], i) => <path key={i} d={d} fill="none" stroke={g(v - 0.1)} strokeWidth="3.500" />)}
        {BLACK.map((d, i) => <path key={i} d={d} fill="#000" stroke="#000" strokeWidth="2" />)}
      </g>
      <g fill="none" strokeLinejoin="round" shapeRendering="crispEdges">
        <path d="M1376 398l-8 12-4 10 1 27 10 8 12 17 13 3 4 7-6 5 8 10 1 18" stroke="#727272" strokeWidth="2" strokeDasharray="9 1 5 1" />
        <path d="M1397 390L1403 405 1412 424 1420 434 1431 441" stroke="#727272" strokeWidth="3" />
        <path d="M1396 390L1403 405 1412 424 1420 434 1431 441" stroke="#a67358" strokeWidth="1" strokeDasharray="6 2" />
        <path d="M1358 524l5 4 4-2-2 4 9 2 4-3-1 5M1377 552l7-8 7-1 5-6 4 1 5-9 1-12M1404 518l-6 4M1406 530l-5-2" stroke="#a5694c" strokeWidth="2" strokeDasharray="4 1 7 1" />
        <path d="M1385 541l6 4 4-6M1402 524l5 4" stroke="#a5694c" strokeWidth="3" />
      </g>
    </g>
    <g fill="none" shapeRendering="crispEdges">
      <path d={COAST} stroke="#444" strokeWidth="1" strokeDasharray="5 1 3 2" opacity=".8" />
      <path d={COAST_W} stroke="#555" strokeWidth="1" strokeDasharray="4 1 6 1" />
      <path d="M455 666l1-9 5-4M444 576l1-10" stroke="#444" strokeWidth="2" />
      <path d="M647 495L665 658 670 662 667 678" stroke="#222" />
      <path d="M593 678h74M647 495h33" stroke="#aaa" />
      <path d="M680 496L794 569v8l8 1 5 8 27 8-2 14 6 3" stroke="#333" strokeDasharray="3 1" />
      <path d="M838 611l46-9 31-27 88-51" stroke="#555" strokeDasharray="2 2" />
      <path d="M1003 524l30 7 13 9 34-15" stroke="#333" strokeDasharray="3 1" />
      <path d="M1080 525l67 32 87 44" stroke="#222" />
      <path d="M1253 553h120" stroke="#e8e8e8" /><path d="M1235 591.500h18" stroke="#666" />
      <path d="M605 449v5" stroke="#111" />
    </g>
    <g fill="#b8694a"><path d="M672 308l4 5-1 2-3-5zM891 315h4v3h-4zM888 320h3v2h-3zM755 291h3v1h-3zM927 268h2v1h-2zM1260 413h9v1h-9zM984 332h2v2h-2zM992 338h2v2h-2zM1114 497h3v2h-3zM1389 371l2 4-2 1zM530 657h2v1h-2zM626 350h1v2h-1zM957 261h3v1h-3zM1350 377h2v1h-2z" /></g>
  </svg>
);

const menus = [
  [<><u>P</u>roject</>, 62.5], [<><u>E</u>dit</>, 41.5], [<><u>V</u>iew</>, 48], [<><u>L</u>ayer</>, 52], [<><u>S</u>ettings</>, 70], [<><u>P</u>lugins</>, 65],
  [<>Vect<u>o</u>r</>, 59], [<><u>R</u>aster</>, 58], [<><u>D</u>atabase</>, 78], [<><u>W</u>eb</>, 44.5], [<><u>M</u>esh</>, 50.5], [<>Pro<u>c</u>essing</>, 89], [<><u>H</u>elp</>, 40],
];

export default function App() {
  return (
    <Window>
      <Global />
      <TitleBar>
        <svg width="16" height="16" viewBox="0 0 16 16" fill="none"><circle cx="8" cy="8" r="6" stroke="#6fae3c" strokeWidth="3" /><path d="M8.500 8.500l6 6" stroke="#589632" strokeWidth="3.200" /><path d="M7 7h3l1 3-3 0z" fill="#ee7913" /></svg>
        <span>*Untitled Project — QGIS</span>
      </TitleBar>
      <MenuBar>{menus.map(([t, w], i) => <MenuLabel key={i} $w={w}>{t}</MenuLabel>)}</MenuBar>
      <ToolBar>
        <Grip $ml={4} $mr={3} />
        <Tool>{I.dataSource}</Tool><Tool>{I.geopackage}</Tool><Tool>{I.shape}</Tool><Tool>{I.feather}</Tool><Tool $w={43}>{I.chip}</Tool>
        <Rule $mr={1} /><Tool>{I.virtual}</Tool><Rule $mr={10} />
        <Grip $ml={0} $mr={6} />
        <Tool $w={41}>{I.hand}</Tool><Tool $w={39}>{I.pan}</Tool><Tool $on $ml={1}>{I.zoomIn}</Tool><Tool $w={42}>{I.zoomOut}</Tool><Tool>{I.zoomFull}</Tool>
        <Tool $off>{I.zoomSel}</Tool><Tool>{I.zoomLayer}</Tool><Tool>{I.zoomNative}</Tool><Tool>{I.zoomLast}</Tool><Tool $off>{I.zoomNext}</Tool>
        <Tool>{I.mapNew}</Tool><Tool>{I.map3d}</Tool><Tool>{I.bookmarkNew}</Tool><Tool>{I.bookmarks}</Tool><Tool>{I.clock}</Tool><Tool><Refresh s={29} /></Tool>
        <Grip $ml={8} $mr={2} />
        <Tool $off>{I.select}</Tool><Caret $c="#999" $ml={1} $mr={3} /><Tool $off>{I.rows}</Tool><Caret $c="#999" $ml={2} $mr={3} />
        <Tool>{I.deselect}</Tool><Caret $ml={1} $mr={3} /><Tool>{I.selectLoc}</Tool>
        <Grip $ml={8} $mr={2} />
        <Tool>{I.identify}</Tool><Tool $off>{I.table}</Tool><Tool $off>{I.abacus}</Tool><Tool $on $ml={1}>{I.gear}</Tool><Tool>{I.sigma}</Tool><Tool>{I.ruler}</Tool>
        <Caret $ml={1} $mr={3} /><Tool>{I.tip}</Tool><Tool $off $w={38}>{I.action}</Tool>
      </ToolBar>
      <ToolBar $last>
        <Grip $ml={4} $mr={3} />
        <Tool>{I.hub}</Tool><Tool>{I.calc}</Tool><Tool>{I.tray}</Tool><Tool>{I.globe}</Tool><Tool>{I.treasure}</Tool><Tool>{I.cloud}</Tool><Tool>{I.about}</Tool>
        <Grip $ml={253} $mr={6} />
        <Tool $off $w={37}>{I.pencils}</Tool><Caret $small $c="#999" $ml={-7} $mr={1} $mt={28} /><Tool $off $w={42}>{I.pencil}</Tool><Tool $off>{I.save}</Tool><Tool $off $w={43}>{I.blob}</Tool><Tool $off $w={38}>{I.vertex}</Tool>
        <Caret $c="#999" $ml={2} $mr={3} /><Tool $off>{I.attrs}</Tool><Tool $off>{I.trash}</Tool><Tool $off>{I.cut}</Tool><Tool $off>{I.copy}</Tool><Tool $off>{I.paste}</Tool><Tool $off>{I.undo}</Tool><Tool $off>{I.redo}</Tool>
        <Grip $ml={38} $mr={205} /><Grip $ml={0} $mr={4} />
        <Tool>{I.python}</Tool><Tool><Preview /></Tool><Tool><Preview a="Prev" b="Inter" /></Tool><Tool><Preview a="Prev" b="Clip" /></Tool><Tool $w={42}>{I.wgsGlobe}</Tool>
      </ToolBar>
      <Main>
        <Dock>
          <DockTitle><span>Browser</span><DockButtons /></DockTitle>
          <DockTools $h={37} $pb={3} $g={11.4}>
            <AddBox /><Refresh s={22} /><Funnel /><TreeArrow up />
            <S s={20} b={20}><circle cx="10" cy="10" r="9.500" fill="#5f8dc4" stroke="#3b6ca4" /><text x="10" y="15.500" fontFamily="Liberation Serif, serif" fontStyle="italic" fontWeight="700" fontSize="16" textAnchor="middle" fill="#fff">i</text></S>
          </DockTools>
          <BrowserBox>
            <Clip>
              <Row $in={103}><Poly /><Name $fs={15.5} $ls={0.32}>gadm36_EGY_1.shp</Name></Row>
              <Row $in={103}><Poly /><Name $fs={15.5} $ls={0.32}>gadm36_EGY_2.shp</Name></Row>
              <Row $in={103}><Poly /><Name $fs={15.5} $ls={0.1}>MRT_grids.shp</Name></Row>
              <Row $in={103} $hov><Poly on /><Name>NorthAfrica.shp</Name></Row>
              <Row $in={67}><Right /><Name $ml={10} /><FolderIcon /><Name $fs={15.5} $ls={0.5}>ECOLOGIVAL UNITS</Name></Row>
              <Row $in={67}><Right /><Name $ml={10} /><FolderIcon /><Name $fs={15.5} $ls={0.2}>LANDCOVER</Name></Row>
              <Row $in={67}><Right /><Name $ml={10} /><FolderIcon /><Name $fs={15.5} $ls={0.3}>NDVI</Name></Row>
            </Clip>
            <BarV><BarPart $v $s={14}><Up /></BarPart><BarPart $v $t $s={43} /><BarPart $v $s={27} /><BarPart $v $t /><BarPart $v $s={13}><Down /></BarPart></BarV>
            <BarH><BarPart $s={14}><Left /></BarPart><BarPart $s={229} /><BarPart $t /><BarPart $s={13}><Right c="#555" /></BarPart></BarH>
            <Corner />
          </BrowserBox>
          <DotLine />
          <DockTitle $mt={-1}><span>Layers</span><DockButtons /></DockTitle>
          <DockTools $h={38} $pb={2} $g={11}>
            <S s={22} b={22}><path d="M1 12l8-8 3 4-6 9z" fill="#fbe04a" /><path d="M1 12l6-3 4 9-4 3z" fill="#e04848" /><path d="M6 11l6 8-5 2-3-3z" fill="#4a80c2" /><path d="M9 11l5-4 4 5-4 6z" fill="#c9924e" stroke="#8a5f2a" strokeWidth=".8" /><path d="M15 9l6-7" stroke="#c9924e" strokeWidth="3" /></S>
            <S s={22} b={22}><g stroke="#888" strokeWidth="1.400" fill="#eee"><path d="M1 8v13h12" fill="none" /><path d="M4 6v12h12V6z" /><path d="M8 2v12h11V2z" /></g><path d="M11 5v8h4V1h-2v9" stroke="#34587f" strokeWidth="1.200" /><Plus x={13} y={13.5} k={0.72} /></S>
            <S s={22} b={22}><path d="M0 11c6-9 16-9 22 0-6 7-16 7-22 0z" fill="#fff" stroke="#777" strokeWidth="1.200" /><path d="M1 7c6-6 14-6 20 1" stroke="#888" /><circle cx="11" cy="10.500" r="5" fill="#5f8dc4" stroke="#34587f" /><circle cx="11" cy="10.500" r="2" fill="#0c2340" /><path d="M19 20h6l-3 3z" fill="#444" /></S>
            <Funnel />
            <S s={22} b={22}><text x="1" y="13" fontFamily="Liberation Serif, serif" fontSize="26" fill="#bbb">ε</text><path d="M11 12h12l-4 4v6h-4v-6z" fill="#ccc" /></S>
            <Caret $c="#aaa" $ml={-3} $mr={-2} />
            <TreeArrow /><TreeArrow up /><AddBox minus />
          </DockTools>
          <LayerBox>
            <Row $in={6} $sel><Down c="#0a3a68" /><Check $ml={9}><Tick /></Check><Name $ml={8} /><RasterIcon sel /><Name $b $u $fs={15.5} $ls={0.55} $ml={6}>Clipped (mask)</Name>
              <Push><svg width="17" height="16"><rect width="17" height="16" rx="1" fill="#f5f5f5" /><path d="M3 6h11v7H3zM4 4v2M7 4v2M10 4v2M13 4v2" fill="none" stroke="#8899aa" /></svg></Push></Row>
            <Row $in={43}><Swatch $c="#000" /><Name>1</Name></Row>
            <Row $in={59}><Name $ls={0.5}>12</Name></Row>
            <Row $in={23}><Check $ml={0}><Tick /></Check><Name $ml={6} /><Swatch $c="#a5705a" $bd="#6b4a3c" /><Name $b $fs={15.5} $ls={0.15}>NorthAfrica</Name></Row>
            <Row $in={6}><Down /><Check $ml={9} /><Name $ml={8} /><RasterIcon /><Name $i $b $fs={15.5} $ls={1} $ml={8}>TEXMHT</Name></Row>
            <Row $in={43}><Swatch $c="#000" /><Name>1</Name></Row>
            <Row $in={59}><Name $ls={0.5}>12</Name></Row>
          </LayerBox>
        </Dock>
        <Splitter />
        <Canvas><MapView /></Canvas>
      </Main>

      <Popup $x={131} $y={430} $w={278}>
        <Item><IconCell $w={28}><svg width="17" height="17" viewBox="0 0 32 32" fill="none"><rect x="3" y="4" width="14" height="17" fill="#ddd" stroke="#999" /><Lens cx={19} /></svg></IconCell><span><u>Z</u>oom to Layer</span></Item>
        <Item><IconCell $w={28}><svg width="17" height="16" fill="none" stroke="#111" strokeWidth="1.500"><ellipse cx="4.500" cy="4" rx="3" ry="2.500" /><ellipse cx="12.500" cy="4" rx="3" ry="2.500" /><path d="M7 3.500h3M0 1l2 2M17 1l-2 2" /><g stroke="none"><Plus x={9} y={8} k={0.62} /></g></svg></IconCell><span><u>S</u>how in Overview</span></Item>
        <Item><IconCell $w={28} />Copy Layer</Item>
        <Item><IconCell $w={28} /><span>Re<u>n</u>ame Layer</span></Item>
        <Item $ls={0.09}><IconCell $w={28}><svg width="17" height="17" viewBox="0 0 32 32" fill="none"><rect x="3" y="4" width="14" height="17" fill="#ddd" stroke="#999" /><Lens cx={19}><text x="19.500" y="16.500" fontFamily="Liberation Sans, sans-serif" fontWeight="700" fontSize="12" textAnchor="middle" fill="#333">1:1</text></Lens></svg></IconCell><span><u>Z</u>oom to Native Resolution (100%)</span></Item>
        <Item><IconCell $w={28} /><span><u>S</u>tretch Using Current Extent</span></Item>
        <Divider />
        <Item><IconCell $w={28}><svg width="16" height="15" fill="#eee" stroke="#777" strokeWidth="1.300"><path d="M2.500 3v10.500h10" /><rect x="4" y="1" width="10.500" height="10.500" /><rect x="9.500" y="9" width="5" height="5" fill="#fbe04a" stroke="#b79a00" /></svg></IconCell><span><u>D</u>uplicate Layer</span></Item>
        <Item><IconCell $w={28}><svg width="16" height="15" fill="#eee" stroke="#888" strokeWidth="1.300"><rect x="2" y="1" width="11" height="11" /><rect x="9" y="10" width="6" height="4" rx="1" fill="#e85050" stroke="none" /></svg></IconCell><span><u>R</u>emove Layer…</span></Item>
        <Divider />
        <Item $ls={0.09}><IconCell $w={28} /><span>Move to <u>B</u>ottom</span></Item>
        <Divider />
        <Item><IconCell $w={28} />Change Data Source…</Item>
        <Divider />
        <Item><IconCell $w={28} /><span><u>S</u>et Layer Scale Visibility…</span></Item>
        <Item><IconCell $w={28} />Layer CRS<Chevron /></Item>
        <Divider />
        <Item $on><IconCell $w={28} />Export<Chevron $on /></Item>
        <Divider />
        <Item><IconCell $w={28} />Styles<Chevron /></Item>
        <Item $ls={-0.1}><IconCell $w={28} /><span><u>P</u>roperties…</span></Item>
      </Popup>
      <Popup $x={408} $y={716} $w={217}>
        <Item $on><IconCell $w={28} />Save As…</Item>
        <Item $ls={-0.03}><IconCell $w={28} />Save as Layer Definition File…</Item>
        <Item $ls={-0.06}><IconCell $w={28} />Save as QGIS Layer Style File…</Item>
      </Popup>
      <Pointer><svg width="14" height="20"><Cursor x={1} y={1} /></svg></Pointer>
    </Window>
  );
}
